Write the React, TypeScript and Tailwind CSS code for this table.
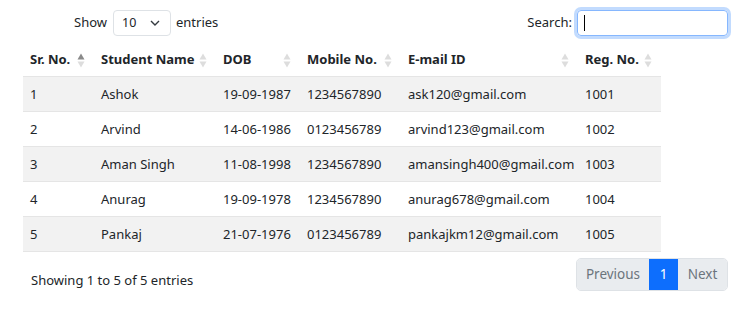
import React from "react";

const rows = [
  ["1", "Ashok", "19-09-1987", "1234567890", "ask120@gmail.com", "1001"],
  ["2", "Arvind", "14-06-1986", "0123456789", "arvind123@gmail.com", "1002"],
  ["3", "Aman Singh", "11-08-1998", "1234567890", "amansingh400@gmail.com", "1003"],
  ["4", "Anurag", "19-09-1978", "1234567890", "anurag678@gmail.com", "1004"],
  ["5", "Pankaj", "21-07-1976", "0123456789", "pankajkm12@gmail.com", "1005"],
];

const cols = [
  { label: "Sr. No.", w: "w-[71px]", active: true },
  { label: "Student Name", w: "w-[122px]" },
  { label: "DOB", w: "w-[84px]" },
  { label: "Mobile No.", w: "w-[101px]" },
  { label: "E-mail ID", w: "w-[177px]" },
  { label: "Reg. No.", w: "w-[83px]" },
];

function SortIcon({ active }: { active?: boolean }) {
  return (
    <svg width="8" height="15" viewBox="0 0 8 15" className="shrink-0">
      <path d="M4 0.5 L7.5 6.5 H0.5 Z" fill={active ? "#8a8a8a" : "#dddddd"} />
      <path d="M4 14.5 L7.5 8.5 H0.5 Z" fill="#dddddd" />
    </svg>
  );
}

export default function App() {
  return (
    <div
      className="w-[750px] h-[311px] bg-white text-[#212529] text-[13px]"
      style={{ fontFamily: '"Noto Sans", "Open Sans", sans-serif' }}
    >
      <div className="flex items-center justify-between pt-[10px] pl-[74px] pr-[22px] h-[36px]">
        <div className="flex items-center">
          <span>Show</span>
          <div className="ml-[6px] mr-[5px] w-[58px] h-[26px] border border-[#dee2e6] rounded-[4px] flex items-center justify-between pl-[8px] pr-[10px] text-[12.5px]">
            <span>10</span>
            <svg width="10" height="6" viewBox="0 0 10 6">
              <path d="M1 1 L5 5 L9 1" fill="none" stroke="#343a40" strokeWidth="1.4" />
            </svg>
          </div>
          <span>entries</span>
        </div>
        <div className="flex items-center">
          <span className="mr-[5px]">Search:</span>
          <div className="w-[151px] h-[26px] border border-[#86b7fe] rounded-[4px] shadow-[0_0_0_3px_rgba(13,110,253,0.25)] flex items-center pl-[6px]">
            <div className="w-[1px] h-[16px] bg-black" />
          </div>
        </div>
      </div>

      <div className="ml-[23px] w-[638px] mt-[7px]">
        <div className="flex h-[34px] items-center font-bold border-b border-[#e5e5e5] pt-[1px]">
          {cols.map((c, i) => (
            <div key={i} className={`${c.w} flex items-center justify-between pl-[7px] pr-[9px] whitespace-nowrap`}>
              <span>{c.label}</span>
              <SortIcon active={c.active} />
            </div>
          ))}
        </div>
        {rows.map((r, ri) => (
          <div
            key={ri}
            className={`flex h-[35px] items-center border-b border-[#e5e5e5] pt-[1px] ${ri % 2 === 0 ? "bg-[#f2f2f2]" : "bg-white"}`}
          >
            {r.map((v, ci) => (
              <div key={ci} className={`${cols[ci].w} pl-[7px] whitespace-nowrap`}>
                {v}
              </div>
            ))}
          </div>
        ))}
      </div>

      <div className="flex items-start justify-between pl-[31px] pr-[22px] mt-[6px]">
        <span className="pt-[13px]">Showing 1 to 5 of 5 entries</span>
        <div className="flex h-[33px] rounded-[5px] overflow-hidden border border-[#dee2e6] text-[#6c757d] text-[13.5px]">
          <div className="w-[72px] bg-[#e9ecef] flex items-center justify-center">Previous</div>
          <div className="w-[29px] bg-[#0d6efd] text-white flex items-center justify-center">1</div>
          <div className="w-[49px] bg-[#e9ecef] flex items-center justify-center">Next</div>
        </div>
      </div>
    </div>
  );
}
